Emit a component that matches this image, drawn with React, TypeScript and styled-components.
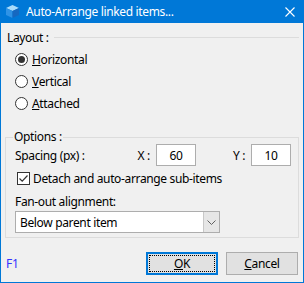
import styled, { createGlobalStyle } from 'styled-components'

const GlobalStyle = createGlobalStyle`
  html, body {
    margin: 0;
    padding: 0;
    background: #fff;
  }
  body {
    font-family: "Noto Sans", "Liberation Sans", sans-serif;
    font-size: 12px;
    letter-spacing: -0.35px;
    color: #000;
  }
`

const Window = styled.div`
  width: 304px;
  height: 283px;
  box-sizing: border-box;
  border: 1px solid #0078d7;
  border-top: none;
  background: #f0f0f0;
  display: flex;
  flex-direction: column;
`

const TitleBar = styled.div`
  height: 23px;
  background: #0078d7;
  color: #fff;
  display: flex;
  align-items: center;
  padding: 0 8px 0 4px;
  gap: 6px;
  font-size: 12px;
  > span {
    flex: 1;
    white-space: nowrap;
  }
`

const Body = styled.div`
  flex: 1;
  display: flex;
  flex-direction: column;
  padding: 6px 4px 7px 4px;
`

const SectionHead = styled.div`
  display: flex;
  align-items: center;
  height: 16px;
  padding-left: 2px;
  gap: 5px;
  &::after {
    content: "";
    flex: 1;
    height: 1px;
    background: #dcdcdc;
    margin-top: 1px;
  }
`

const RadioList = styled.div`
  display: flex;
  flex-direction: column;
  padding: 3px 0 0 10px;
`

const Row = styled.label`
  display: flex;
  align-items: center;
  height: 22px;
  gap: 4px;
`

const RadioMark = styled.span<{ $checked?: boolean }>`
  width: 13px;
  height: 13px;
  box-sizing: border-box;
  border: 1px solid #333;
  border-radius: 50%;
  background: #fff;
  display: flex;
  align-items: center;
  justify-content: center;
  &::after {
    content: "";
    width: 7px;
    height: 7px;
    border-radius: 50%;
    background: ${p => (p.$checked ? '#333' : 'transparent')};
  }
`

const Group = styled.fieldset`
  margin: 15px 0 0 0;
  border: 1px solid #dcdcdc;
  padding: 0 7px 4px 9px;
  display: flex;
  flex-direction: column;
  > legend {
    padding: 0 1px;
    margin-left: -2px;
    height: 16px;
    line-height: 16px;
  }
`

const SpacingRow = styled.div`
  display: flex;
  align-items: center;
  height: 22px;
  margin-top: -1px;
  > span:first-child {
    flex: 1;
  }
`

const AxisLabel = styled.span<{ $gap?: number }>`
  margin-left: ${p => p.$gap ?? 0}px;
  margin-right: 6px;
`

const NumField = styled.div`
  width: 40px;
  height: 22px;
  box-sizing: border-box;
  border: 1px solid #adadad;
  background: #fff;
  display: flex;
  align-items: center;
  justify-content: center;
`

const CheckRow = styled.div`
  display: flex;
  align-items: center;
  height: 20px;
  margin-top: 2px;
  padding-left: 2px;
  gap: 3px;
`

const CheckMark = styled.span`
  width: 13px;
  height: 13px;
  box-sizing: border-box;
  border: 1px solid #333;
  background: #fff;
  display: flex;
  align-items: center;
  justify-content: center;
`

const FieldLabel = styled.div`
  height: 16px;
  line-height: 16px;
  margin-top: 6px;
`

const Select = styled.div`
  width: 205px;
  height: 22px;
  box-sizing: border-box;
  border: 1px solid #adadad;
  background: #fff;
  display: flex;
  align-items: stretch;
  margin-top: 1px;
  > span {
    flex: 1;
    padding-left: 4px;
    display: flex;
    align-items: center;
  }
  > div {
    width: 15px;
    background: #e6e6e6;
    border-left: 1px solid #c8c8c8;
    display: flex;
    align-items: center;
    justify-content: center;
  }
`

const Footer = styled.div`
  margin-top: auto;
  display: flex;
  align-items: center;
  gap: 8px;
  padding-right: 1px;
  > span {
    flex: 1;
    color: #3333ff;
    padding-left: 1px;
  }
`

const Button = styled.div<{ $default?: boolean }>`
  width: 72px;
  height: 23px;
  box-sizing: border-box;
  background: #e1e1e1;
  border: ${p => (p.$default ? '2px solid #0078d7' : '1px solid #adadad')};
  display: flex;
  align-items: center;
  justify-content: center;
  position: relative;
  ${p => p.$default && `
    &::before {
      content: "";
      position: absolute;
      inset: 1px;
      border: 1px dotted #000;
    }
  `}
`

const CubeIcon = () => (
  <svg width="15" height="15" viewBox="0 0 15 15">
    <polygon points="7.5,1 14,4 7.5,7 1,4" fill="#a9dcfb" />
    <polygon points="1,4 7.5,7 7.5,14 1,11" fill="#2f93e6" />
    <polygon points="14,4 7.5,7 7.5,14 14,11" fill="#1668c0" />
  </svg>
)

const CloseIcon = () => (
  <svg width="10" height="10" viewBox="0 0 10 10">
    <path d="M0.5 0.5 L9.5 9.5 M9.5 0.5 L0.5 9.5" stroke="#fff" strokeWidth="1.1" />
  </svg>
)

const App = () => {
  return (
    <>
      <GlobalStyle />
      <Window>
        <TitleBar>
          <CubeIcon />
          <span>Auto-Arrange linked items...</span>
          <CloseIcon />
        </TitleBar>
        <Body>
          <SectionHead>Layout :</SectionHead>
          <RadioList>
            <Row><RadioMark $checked /><span><u>H</u>orizontal</span></Row>
            <Row><RadioMark /><span><u>V</u>ertical</span></Row>
            <Row><RadioMark /><span><u>A</u>ttached</span></Row>
          </RadioList>
          <Group>
            <legend>Options :</legend>
            <SpacingRow>
              <span>Spacing (px) :</span>
              <AxisLabel>X :</AxisLabel>
              <NumField>60</NumField>
              <AxisLabel $gap={37}>Y :</AxisLabel>
              <NumField>10</NumField>
            </SpacingRow>
            <CheckRow>
              <CheckMark>
                <svg width="11" height="11" viewBox="0 0 11 11">
                  <path d="M1.5 5.5 L4.2 8.2 L9.5 2.5" fill="none" stroke="#333" strokeWidth="1.2" />
                </svg>
              </CheckMark>
              <span>Detach and auto-arrange sub-items</span>
            </CheckRow>
            <FieldLabel>Fan-out alignment:</FieldLabel>
            <Select>
              <span>Below parent item</span>
              <div>
                <svg width="9" height="5" viewBox="0 0 9 5">
                  <path d="M0.5 0.5 L4.5 4.5 L8.5 0.5" fill="none" stroke="#606060" strokeWidth="1" />
                </svg>
              </div>
            </Select>
          </Group>
          <Footer>
            <span>F1</span>
            <Button $default><span><u>O</u>K</span></Button>
            <Button><span><u>C</u>ancel</span></Button>
          </Footer>
        </Body>
      </Window>
    </>
  )
}

export default App
